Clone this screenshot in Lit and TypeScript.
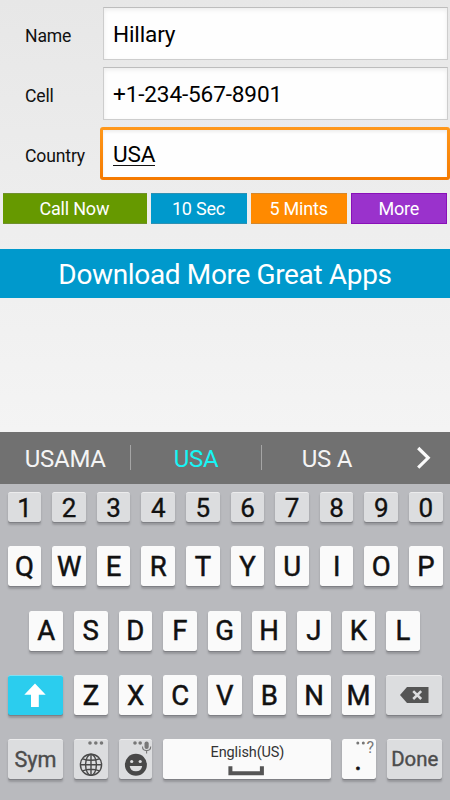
import { LitElement, html, css, svg } from "lit";
import { customElement, property } from "lit/decorators.js";

@customElement("key-cap")
class KeyCap extends LitElement {
  @property({ reflect: true }) kind = "letter";

  static styles = css`
    :host {
      box-sizing: border-box;
      position: relative;
      display: flex;
      align-items: center;
      justify-content: center;
      flex: 0 0 33.6px;
      height: 40px;
      border-radius: 2.5px;
      background: #fafafa;
      box-shadow: 0 1px 0.5px #7f8085, 0 2.5px 2px rgba(60, 60, 65, 0.28);
      color: #111;
      font: 400 27.5px/1 Roboto, sans-serif;
      -webkit-text-stroke: 0.5px currentColor;
      padding-top: 1px;
    }
    :host([kind="number"]) {
      height: 30px;
      font-size: 26px;
      -webkit-text-stroke-width: 0.35px;
    }
    :host([kind="number"]),
    :host([kind="tool"]),
    :host([kind="wide"]) {
      background: #dcdddf;
      border-top: 1px solid #ececed;
      padding-top: 0;
    }
    :host([kind="wide"]) {
      flex-basis: 55.5px;
      color: #4c4c4c;
      font-size: 20.4px;
      -webkit-text-stroke-width: 0.4px;
    }
    :host([kind="shift"]) {
      flex-basis: 55.5px;
      background: #2bcdee;
      border-top: 1px solid #7fdff2;
      padding-top: 0;
    }
    :host([kind="space"]) {
      flex-basis: 168px;
      -webkit-text-stroke-width: 0;
    }
  `;

  render() {
    return html`<slot></slot>`;
  }
}

const globe = svg`
  <circle cx="91" cy="764.8" r="10.6"/>
  <ellipse cx="91" cy="764.8" rx="5.4" ry="10.6"/>
  <path d="M91 754V775.5M80.4 764.8H101.6M82.6 758.8Q91 761.8 99.4 758.8M82.6 770.8Q91 767.8 99.4 770.8"/>`;

@customElement("app-root")
class AppRoot extends LitElement {
  static styles = css`
    :host {
      display: flex;
      flex-direction: column;
      width: 450px;
      height: 800px;
      overflow: hidden;
      background: linear-gradient(#e7e7e7, #f4f4f4 431px);
      color: #111;
      font-family: Roboto, sans-serif;
    }
    * { box-sizing: border-box; }
    svg { display: block; }
    .form {
      display: grid;
      grid-template-columns: 77.5px 345px;
      grid-auto-rows: 53px;
      row-gap: 7px;
      padding: 7px 0 0 25px;
      height: 192.5px;
      flex: none;
    }
    .label { font-size: 17.6px; letter-spacing: -0.15px; line-height: 20px; padding-top: 19px; }
    .field {
      padding: 14px 11px 0 9.5px;
      border: 1px solid #cdcdcd;
      border-top-color: #bdbdbd;
      background: #fefefe;
      box-shadow: inset 0 2px 4px #ededed;
      color: #000;
      font-size: 22.6px;
      letter-spacing: -0.15px;
      line-height: 26px;
    }
    .focused {
      margin: 0 -2.5px;
      padding: 12px 10px 0 10px;
      border: 3px solid transparent;
      border-radius: 3px;
      background: linear-gradient(#fefefe, #fefefe) padding-box,
        linear-gradient(#ff981b, #f57a00) border-box;
      box-shadow: inset 0 2px 3px #eee;
    }
    .focused span { border-bottom: 1.4px solid #111; display: inline-block; line-height: 24px; height: 23px; }
    .actions {
      display: grid;
      grid-template-columns: 144.4px 96.3px 96.3px 96.3px;
      gap: 3.8px;
      padding-left: 2.7px;
      height: 31px;
      flex: none;
    }
    .action, .banner, .word { display: flex; align-items: center; justify-content: center; }
    .action { color: #fff; font-size: 18px; letter-spacing: -0.2px; padding: 1px 1px 0 0; border: 1px solid rgba(130,130,130,.35); border-width: 1px 0; }
    .green { background: #669900; }
    .blue { background: #0099cc; }
    .orange { background: #ff8a00; }
    .purple { background: #9a32cc; border: 1px solid #8910b8; }
    .banner { flex: none; margin-top: 25.5px; height: 49px; background: #0099cc; color: #fff; font-size: 28px; letter-spacing: -0.35px; padding-top: 2px; }
    .suggestions {
      flex: none;
      display: grid;
      grid-template-columns: 130.5px 131px 131px 57.5px;
      align-items: center;
      height: 52.5px;
      margin-top: 133.5px;
      background: #717171;
      color: #f4f4f4;
      font-size: 24px;
      letter-spacing: -0.25px;
    }
    .word { height: 25px; border-right: 1px solid #a5a5a5; padding: 2px 0 0 1px; }
    .word.last { border-color: transparent; }
    .picked { color: #17f5f5; }
    .keyboard {
      flex: 1;
      background: #b9babe;
      padding: 8.3px 0 0 7.7px;
      display: flex;
      flex-direction: column;
    }
    .row { display: flex; gap: 11px; height: 40px; flex: none; margin-bottom: 24.2px; }
    .row.numbers { height: 30px; }
    .row.home { padding-left: 21.7px; }
    .lang { position: absolute; top: 6px; font-size: 14.5px; letter-spacing: -0.12px; color: #333; line-height: 16px; }
    .over { position: absolute; inset: 0; width: 100%; height: 100%; overflow: visible; }
    .tooltop { inset: -1px 0 0; height: 40px; }
    .punct { position: absolute; left: 24px; top: 1px; font-size: 16px; line-height: 16px; color: #777; -webkit-text-stroke: 0; }
    .dot { position: relative; top: 1px; left: -1px; font-size: 29px; }
    .sym { font-size: 21.6px; }
  `;

  private caps(text: string, kind = "letter") {
    return [...text].map((c) => html`<key-cap kind=${kind}>${c}</key-cap>`);
  }

  private field(label: string, value: string, focused = false) {
    return html`
      <div class="label">${label}</div>
      <div class="field ${focused ? "focused" : ""}"><span>${value}</span></div>`;
  }

  render() {
    return html`
      <div class="form">
        ${this.field("Name", "Hillary")}
        ${this.field("Cell", "+1-234-567-8901")}
        ${this.field("Country", "USA", true)}
      </div>
      <div class="actions">
        <div class="action green">Call Now</div>
        <div class="action blue">10 Sec</div>
        <div class="action orange">5 Mints</div>
        <div class="action purple">More</div>
      </div>
      <div class="banner">Download More Great Apps</div>
      <div class="suggestions">
        <div class="word">USAMA</div>
        <div class="word picked">USA</div>
        <div class="word last">US A</div>
        <svg width="57" height="52" viewBox="393 432 57 52" fill="none" stroke="#fafafa" stroke-width="3.2">
          <path d="M418.2 448L428.2 457.8L418.2 467.6"/>
        </svg>
      </div>
      <div class="keyboard">
        <div class="row numbers">${this.caps("1234567890", "number")}</div>
        <div class="row">${this.caps("QWERTYUIOP")}</div>
        <div class="row home">${this.caps("ASDFGHJKL")}</div>
        <div class="row">
          <key-cap kind="shift">
            <svg width="22" height="24" viewBox="0 0 22 24"><path fill="#fff" d="M11 .5L21.7 11.7H14.8V24H7V11.7H.3Z"/></svg>
          </key-cap>
          ${this.caps("ZXCVBNM")}
          <key-cap kind="wide">
            <svg width="29" height="16" viewBox="0 0 29 16">
              <path fill="#555" d="M7 0H28.5V16H7L0 8Z"/>
              <path stroke="#dcdddf" stroke-width="2.5" d="M13.2 4.2L21.2 12M21.2 4.2L13.2 12"/>
            </svg>
          </key-cap>
        </div>
        <div class="row">
          <key-cap kind="wide"><span class="sym">Sym</span></key-cap>
          <key-cap kind="tool">
            <svg class="over tooltop" viewBox="74 739 33.6 40">
              <g fill="#777"><circle cx="90" cy="743" r="1.8"/><circle cx="95.8" cy="743" r="1.8"/><circle cx="101.5" cy="743" r="1.8"/></g>
              <g fill="none" stroke="#484848" stroke-width="1.4">${globe}</g>
            </svg>
          </key-cap>
          <key-cap kind="tool">
            <svg class="over tooltop" viewBox="118.8 739 33.6 40">
              <g fill="#777"><circle cx="134.8" cy="743" r="1.8"/><circle cx="140" cy="743" r="1.8"/><rect x="144.3" y="741.5" width="4.2" height="7.5" rx="2"/></g>
              <path fill="none" stroke="#777" stroke-width="1.1" d="M142.3 746.5Q142.3 750.6 146.4 750.6Q150.5 750.6 150.5 746.5M146.4 750.6V753.5"/>
              <circle cx="135.7" cy="764.8" r="11" fill="#484848"/>
              <g fill="#dcdddf"><circle cx="131.5" cy="761.5" r="1.6"/><circle cx="140" cy="761.5" r="1.6"/><path d="M129.5 766H142Q141.3 771.3 135.7 771.3Q130.2 771.3 129.5 766Z"/></g>
            </svg>
          </key-cap>
          <key-cap kind="space">
            <span class="lang">English(US)</span>
            <svg class="over" viewBox="163.4 739 168 40"><path fill="none" stroke="#555" stroke-width="4" d="M230.8 766.2V773.2H262.3V766.2"/></svg>
          </key-cap>
          <key-cap>
            <svg class="over" viewBox="341.7 739 33.6 40"><g fill="#777"><circle cx="357.5" cy="743" r="1.5"/><circle cx="363" cy="743" r="1.5"/></g></svg>
            <span class="punct">?</span><span class="dot">.</span>
          </key-cap>
          <key-cap kind="wide">Done</key-cap>
        </div>
      </div>`;
  }
}
